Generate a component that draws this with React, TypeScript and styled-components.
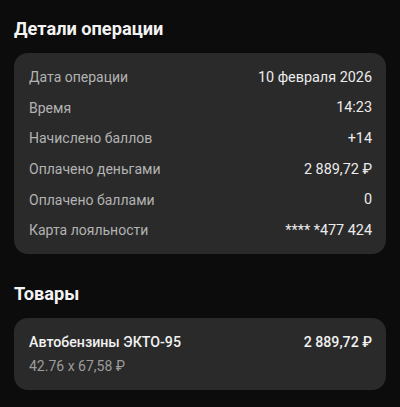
import styled, { createGlobalStyle } from 'styled-components';

const GlobalStyle = createGlobalStyle`
  html, body {
    margin: 0;
    padding: 0;
    background: #0c0c0c;
  }

  body {
    font-family: Roboto, "Noto Sans", "Liberation Sans", sans-serif;
    color: #ececec;
    -webkit-font-smoothing: antialiased;
  }
`;

const Page = styled.div`
  width: 400px;
  min-height: 407px;
  padding: 17px 14px 0;
  box-sizing: border-box;
`;

const SectionTitle = styled.h2<{ $top?: number }>`
  margin: ${props => props.$top ?? 0}px 0 0;
  font-size: 18.2px;
  line-height: 24px;
  font-weight: 700;
  color: #f4f4f4;
`;

const Card = styled.div<{ $padding: string }>`
  margin-top: 12px;
  background: #2a2a2a;
  border-radius: 14px;
  padding: ${props => props.$padding};
`;

const DetailRow = styled.div`
  display: flex;
  justify-content: space-between;
  align-items: center;
  height: 30.6px;
  font-size: 14px;
`;

const Label = styled.span`
  color: #b3b3b3;
`;

const Value = styled.span`
  font-size: 14.4px;
  color: #ececec;
`;

const ItemTop = styled.div`
  display: flex;
  justify-content: space-between;
  align-items: center;
  font-size: 14.2px;
  line-height: 20px;
  font-weight: 500;
  color: #f2f2f2;
`;

const ItemSub = styled.div`
  margin-top: 4px;
  font-size: 14px;
  line-height: 20px;
  color: #9c9c9c;
`;

const details: [string, string][] = [
  ['Дата операции', '10 февраля 2026'],
  ['Время', '14:23'],
  ['Начислено баллов', '+14'],
  ['Оплачено деньгами', '2 889,72 ₽'],
  ['Оплачено баллами', '0'],
  ['Карта лояльности', '**** *477 424'],
];

const App = (): JSX.Element => (
  <>
    <GlobalStyle />
    <Page>
      <SectionTitle>Детали операции</SectionTitle>
      <Card $padding="9px 14px 8px 15px">
        {details.map(([label, value]) => (
          <DetailRow key={label}>
            <Label>{label}</Label>
            <Value>{value}</Value>
          </DetailRow>
        ))}
      </Card>

      <SectionTitle $top={28}>Товары</SectionTitle>
      <Card $padding="14px 14px 14px 15px">
        <ItemTop>
          <span>Автобензины ЭКТО-95</span>
          <span>2 889,72 ₽</span>
        </ItemTop>
        <ItemSub>42.76 x 67,58 ₽</ItemSub>
      </Card>
    </Page>
  </>
);

export default App;
